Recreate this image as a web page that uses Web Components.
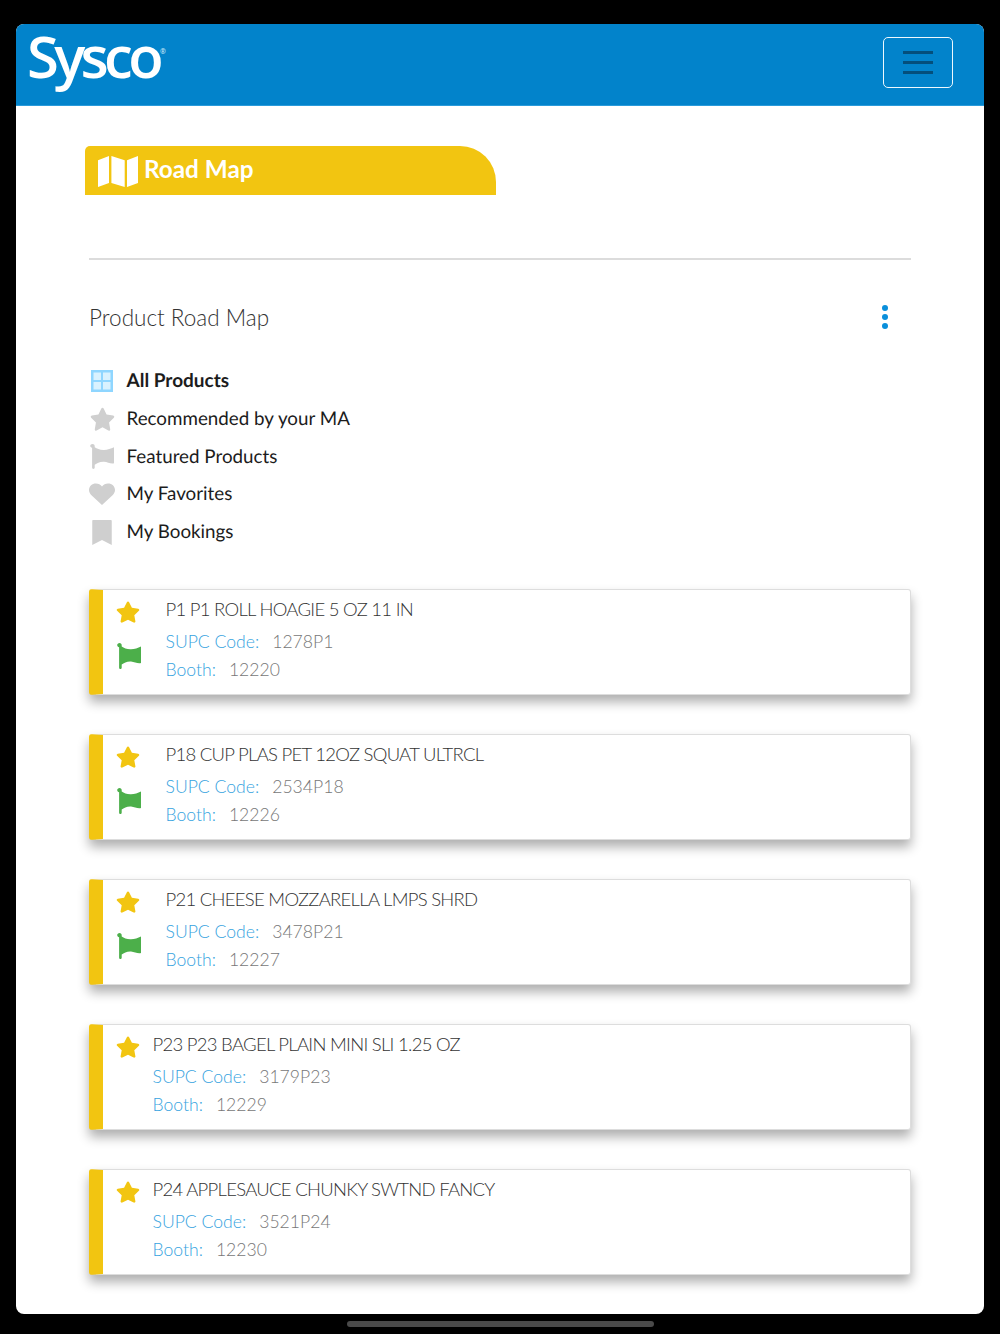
<!DOCTYPE html>
<html lang="en">
<head>
<meta charset="utf-8">
<title>Road Map</title>
<style>
    html, body { margin: 0; background: #000; }
    body { font-family: Lato, "Liberation Sans", sans-serif; }
</style>
</head>
<body>
<app-screen>
    <sysco-header slot="header"></sysco-header>
    <road-map-tab>Road Map</road-map-tab>
    <section-title>Product Road Map</section-title>
    <filter-list>
        <filter-item icon="grid" active>All Products</filter-item>
        <filter-item icon="star">Recommended by your MA</filter-item>
        <filter-item icon="flag">Featured Products</filter-item>
        <filter-item icon="heart">My Favorites</filter-item>
        <filter-item icon="bookmark">My Bookings</filter-item>
    </filter-list>
    <product-card name="P1 P1 ROLL HOAGIE 5 OZ 11 IN" code="1278P1" booth="12220" featured></product-card>
    <product-card name="P18 CUP PLAS PET 12OZ SQUAT ULTRCL" code="2534P18" booth="12226" featured></product-card>
    <product-card name="P21 CHEESE MOZZARELLA LMPS SHRD" code="3478P21" booth="12227" featured></product-card>
    <product-card name="P23 P23 BAGEL PLAIN MINI SLI 1.25 OZ" code="3179P23" booth="12229"></product-card>
    <product-card name="P24 APPLESAUCE CHUNKY SWTND FANCY" code="3521P24" booth="12230"></product-card>
</app-screen>

<script>
// icon paths, all drawn on a 24x24 box unless a box is passed
const ICONS = {
    grid: '<path d="M1 1h22v22H1z" fill="#8fd6ff"/><path d="M3.500 3.500h7.500v7.500h-7.500zM13 3.500h7.500v7.500H13zM3.500 13h7.500v7.500h-7.500zM13 13h7.500v7.500H13z" fill="#d9f2ff"/>',
    star: '<path d="M12 1.600c.5 0 .9.3 1.100.7l2.800 5.900 6.300.9c1 .1 1.400 1.400.7 2.100l-4.600 4.600 1.100 6.500c.2 1-.9 1.800-1.800 1.300L12 20.500l-5.600 3.100c-.9.5-2-.3-1.800-1.300l1.100-6.500-4.600-4.600c-.7-.7-.3-2 .7-2.100l6.300-.9 2.800-5.900c.2-.4.6-.7 1.100-.7z"/>',
    flag: '<path d="M3.500 0C4.800 0 5.700 1 5.700 2.200v1.300C8 5 11 6.500 15 6.300c3.500-.2 7-1.300 10-2.800V20c-3 1-6.500-1.200-10-1.500-4-.3-7 1.500-9.300 3.100v3.200c0 .8-.7 1.200-1.300 1.200s-1.300-.4-1.300-1.200V4.200C2 3.800 1.200 3 1.200 2.200 1.200 1 2.300 0 3.500 0z"/>',
    heart: '<path d="M12 23 2.500 13.400C.9 11.800 0 9.900 0 8c0-3.800 2.900-6.500 6.400-6.500 2.300 0 4.300 1.100 5.600 3 1.300-1.900 3.300-3 5.600-3C21.100 1.500 24 4.200 24 8c0 1.900-.9 3.800-2.500 5.400z"/>',
    bookmark: '<path d="M4 0h16c.6 0 1 .4 1 1v23l-9-4.800L3 24V1c0-.6.4-1 1-1z"/>',
    map: '<path d="M0 4.300 11 0v27L0 31zM13.400 0l13.300 4.300V31l-13.300-4zM29 4.300 40 0v27l-11 4z"/>'
};

function svgIcon(name, w, h, fill, box) {
    return `<svg width="${w}" height="${h}" viewBox="${box || '0 0 24 24'}" fill="${fill}" preserveAspectRatio="none" xmlns="http://www.w3.org/2000/svg">${ICONS[name]}</svg>`;
}

class AppScreen extends HTMLElement {
    constructor() {
        super();
        this.attachShadow({ mode: 'open' });
        this.shadowRoot.innerHTML = `
            <style>
                :host { display: block; height: 1334px; padding: 24px 16px 0; box-sizing: border-box; background: #000; overflow: hidden; }
                .screen { height: 1290px; background: #fff; border-radius: 8px; overflow: hidden; }
                .content { padding: 40px 73px 0; display: flex; flex-direction: column; }
                .home { width: 307px; height: 6px; margin: 7px auto 0; border-radius: 3px; background: #4a4a4a; }
            </style>
            <div class="screen">
                <slot name="header"></slot>
                <div class="content"><slot></slot></div>
            </div>
            <div class="home"></div>
        `;
    }
}

class SyscoHeader extends HTMLElement {
    constructor() {
        super();
        this.attachShadow({ mode: 'open' });
        this.shadowRoot.innerHTML = `
            <style>
                :host { display: flex; justify-content: space-between; align-items: center; height: 82px; padding: 0 31px 0 11px; background: #0283cb; box-shadow: inset 0 -1px #2a9bdb; }
                .logo { display: flex; align-items: flex-start; color: #fff; font: 600 58px/82px "Open Sans", sans-serif; letter-spacing: -4.700px; margin-top: -18px; }
                .logo sup { font-size: 7px; line-height: 1; margin: 33px 0 0 1px; letter-spacing: 0; color: #cfe9f8; }
                button { display: flex; flex-direction: column; justify-content: center; gap: 7px; align-items: center; width: 70px; height: 51px; margin-bottom: 6px; padding: 0; box-sizing: border-box; background: none; border: 1.500px solid #eef8fe; border-radius: 5px; }
                span.bar { width: 30px; height: 3px; background: #044f7c; }
            </style>
            <div class="logo">Sysco<sup>®</sup></div>
            <button aria-label="Menu"><span class="bar"></span><span class="bar"></span><span class="bar"></span></button>
        `;
    }
}

class RoadMapTab extends HTMLElement {
    constructor() {
        super();
        this.attachShadow({ mode: 'open' });
        this.shadowRoot.innerHTML = `
            <style>
                :host { display: flex; align-items: center; gap: 6px; width: 411px; height: 49px; margin-left: -4px; padding: 0 0 3px 13px; box-sizing: border-box; background: #f2c511; border-radius: 5px 36px 0 0; color: #fff; font: 700 24.300px/1 Lato, sans-serif; }
                svg { display: block; margin-top: 4px; }
            </style>
            ${svgIcon('map', 40, 31, '#fff', '0 0 40 31')}
            <slot></slot>
        `;
    }
}

class SectionTitle extends HTMLElement {
    constructor() {
        super();
        this.attachShadow({ mode: 'open' });
        this.shadowRoot.innerHTML = `
            <style>
                :host { display: block; margin-top: 63px; padding-top: 43px; border-top: 2px solid #dcdcdc; position: relative; height: 30px; color: #333; font: 300 22.500px/30px Lato, sans-serif; }
                .more { position: absolute; right: 23px; top: 45px; display: flex; flex-direction: column; gap: 3px; }
                .more i { width: 6px; height: 6px; border-radius: 50%; background: #0a8fdb; }
            </style>
            <slot></slot>
            <div class="more"><i></i><i></i><i></i></div>
        `;
    }
}

class FilterList extends HTMLElement {
    constructor() {
        super();
        this.attachShadow({ mode: 'open' });
        this.shadowRoot.innerHTML = `
            <style>
                :host { display: flex; flex-direction: column; gap: 5.750px; margin-top: 32px; margin-bottom: 41px; }
            </style>
            <slot></slot>
        `;
    }
}

class FilterItem extends HTMLElement {
    constructor() {
        super();
        this.attachShadow({ mode: 'open' });
    }

    connectedCallback() {
        const name = this.getAttribute('icon');
        const sizes = { grid: [22, 22], star: [25, 25], flag: [26, 25], heart: [26, 24], bookmark: [26, 25] };
        const [w, h] = sizes[name];
        const box = { grid: '1 1 22 22', flag: '0 0 26 26' }[name];
        this.shadowRoot.innerHTML = `
            <style>
                :host { display: flex; align-items: center; height: 32px; color: #1c1c1c; font: 400 18.800px/32px Lato, sans-serif; text-rendering: geometricPrecision; }
                :host([active]) { font-weight: 700; font-size: 19px; }
                .icon { width: 26px; margin-right: 11.500px; display: flex; justify-content: center; }
                svg { display: block; }
            </style>
            <div class="icon">${svgIcon(name, w, h, '#cfcfcf', box)}</div>
            <slot></slot>
        `;
    }
}

class ProductCard extends HTMLElement {
    constructor() {
        super();
        this.attachShadow({ mode: 'open' });
    }

    connectedCallback() {
        const flag = this.hasAttribute('featured') ? `<div class="flag">${svgIcon('flag', 26, 26, '#4caf4a', '0 0 26 26')}</div>` : '';
        this.shadowRoot.innerHTML = `
            <style>
                :host { display: flex; height: 106px; margin-bottom: 39px; box-sizing: border-box; background: #fff; border: 1px solid #ddd; border-left: 14px solid #f2c511; border-radius: 3px; box-shadow: 0 7px 12px rgba(0,0,0,.32); font-family: Lato, sans-serif; }
                .icons { width: 26px; margin: 10px 11px 0 12.500px; }
                .flag { margin-top: 20px; }
                svg { display: block; }
                .name { margin-top: 6px; color: #333; font: 300 18.500px/26px Lato, sans-serif; letter-spacing: -.72px; white-space: nowrap; }
                .row { display: flex; gap: 13px; margin-top: 2px; font: 300 17.600px/26px Lato, sans-serif; color: #777; }
                .row.first { margin-top: 7px; }
                .row b { font-weight: 300; color: #37a3e0; }
                .featured { padding-left: 13px; }
            </style>
            <div class="icons">${svgIcon('star', 24, 23, '#f2c511')}${flag}</div>
            <div class="${flag ? 'featured' : ''}">
                <div class="name">${this.getAttribute('name')}</div>
                <div class="row first"><b>SUPC Code:</b><span>${this.getAttribute('code')}</span></div>
                <div class="row"><b>Booth:</b><span>${this.getAttribute('booth')}</span></div>
            </div>
        `;
    }
}

customElements.define('app-screen', AppScreen);
customElements.define('sysco-header', SyscoHeader);
customElements.define('road-map-tab', RoadMapTab);
customElements.define('section-title', SectionTitle);
customElements.define('filter-list', FilterList);
customElements.define('filter-item', FilterItem);
customElements.define('product-card', ProductCard);
</script>
</body>
</html>
